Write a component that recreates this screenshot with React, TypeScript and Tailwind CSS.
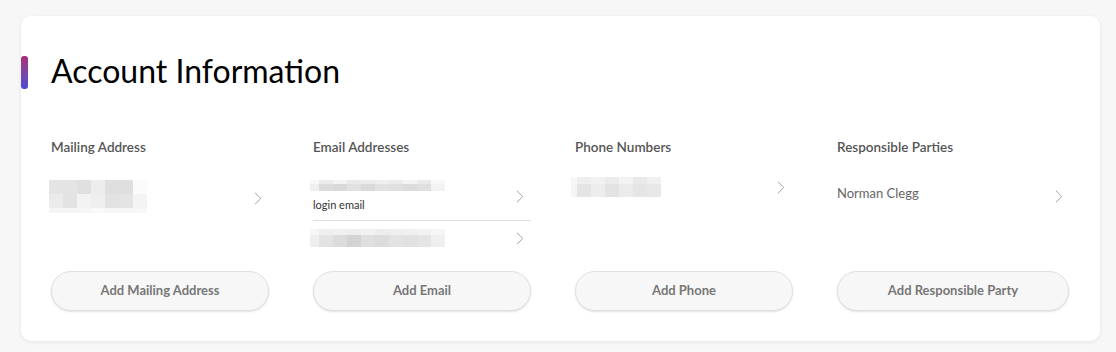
type Cell = [number, string];
type Band = { h: number; cells: Cell[] };

function Pixelated({ bands }: { bands: Band[] }) {
  const width = Math.max(...bands.map((b) => b.cells.reduce((s, c) => s + c[0], 0)));
  const height = bands.reduce((s, b) => s + b.h, 0);
  let y = 0;
  return (
    <svg width={width} height={height} className="block">
      {bands.map((b, i) => {
        let x = 0;
        const top = y;
        y += b.h;
        return b.cells.map(([w, c], j) => {
          const r = <rect key={`${i}-${j}`} x={x} y={top} width={w} height={b.h} fill={c} />;
          x += w;
          return r;
        });
      })}
    </svg>
  );
}

const mailingBlur: Band[] = [
  { h: 14, cells: [[14, '#e4e4e4'], [14, '#e4e4e4'], [14, '#e0e0e0'], [14, '#ededed'], [14, '#dfdfdf'], [14, '#dfdfdf'], [14, '#fbfbfb']] },
  { h: 14, cells: [[14, '#ebebeb'], [14, '#e3e3e3'], [14, '#f3f3f3'], [14, '#efefef'], [14, '#e2e2e2'], [14, '#e4e4e4'], [14, '#f4f4f4']] },
  { h: 5, cells: [[14, '#f5f5f5'], [14, '#f5f5f5'], [14, '#f6f6f6'], [14, '#f9f9f9'], [14, '#f6f6f6'], [14, '#f6f6f6'], [14, '#f7f7f7']] },
];

const emailBlur1: Band[] = [
  { h: 4, cells: [[9, '#f8f8f8'], [14, '#ececec'], [14, '#f3f3f3'], [14, '#e9e9e9'], [14, '#ebebeb'], [14, '#efefef'], [14, '#ececec'], [14, '#f4f4f4'], [14, '#eaeaea'], [14, '#f8f8f8']] },
  { h: 7, cells: [[9, '#efefef'], [14, '#dcdcdc'], [14, '#d9d9d9'], [14, '#e1e1e1'], [14, '#dadada'], [14, '#e2e2e2'], [14, '#e0e0e0'], [14, '#dcdcdc'], [14, '#dfdfdf'], [14, '#f3f3f3']] },
];

const emailBlur2: Band[] = [
  { h: 6, cells: [[9, '#f6f6f6'], [14, '#efefef'], [14, '#f0f0f0'], [14, '#eeeeee'], [14, '#f1f1f1'], [14, '#ededed'], [14, '#efefef'], [14, '#f0f0f0'], [14, '#f2f2f2'], [14, '#f6f6f6']] },
  { h: 12, cells: [[9, '#efefef'], [14, '#e3e3e3'], [14, '#dcdcdc'], [14, '#d3d3d3'], [14, '#dfdfdf'], [14, '#dcdcdc'], [14, '#e3e3e3'], [14, '#e1e1e1'], [14, '#e4e4e4'], [14, '#efefef']] },
];

const phoneBlur: Band[] = [
  { h: 7, cells: [[6, '#f7f7f7'], [14, '#eeeeee'], [14, '#f1f1f1'], [14, '#ebebeb'], [14, '#f3f3f3'], [14, '#e9e9e9'], [14, '#f0f0f0']] },
  { h: 13, cells: [[6, '#f5f5f5'], [14, '#e4e4e4'], [14, '#ededed'], [14, '#e3e3e3'], [14, '#ebebeb'], [14, '#e5e5e5'], [14, '#e8e8e8']] },
];

function Chevron() {
  return (
    <svg width="8" height="13" viewBox="0 0 8 13" className="shrink-0">
      <polyline points="1,0.8 6.8,6.5 1,12.2" fill="none" stroke="#a3a3a3" strokeWidth="1" />
    </svg>
  );
}

function Column({ title, children, button }: { title: string; children: React.ReactNode; button: string }) {
  return (
    <div className="flex flex-col">
      <h3 className="mt-[123px] h-4 text-[13.5px] font-semibold leading-4 text-[#555]">{title}</h3>
      <div className="h-[116px]">{children}</div>
      <button className="h-10 w-full rounded-full border border-[#e1e1e1] bg-[#f7f7f7] text-[13px] font-bold text-[#777] shadow-[0_1px_2px_rgba(0,0,0,0.12)]">
        {button}
      </button>
    </div>
  );
}

export default function App() {
  return (
    <div className="min-h-screen bg-[#f7f7f7] px-[21px] pt-4 pb-[11px]" style={{ fontFamily: 'Lato, "Open Sans", sans-serif' }}>
      <div className="relative h-[325px] w-[1079px] rounded-[10px] bg-white shadow-[0_1px_4px_rgba(0,0,0,0.08)]">
        <div className="absolute left-0 top-10 h-[33px] w-[7px] rounded-[3px] bg-gradient-to-b from-[#a62a78] to-[#4b4ad2]" />
        <h1 className="absolute left-[30px] top-[35px] text-[32px] leading-10 text-black">Account Information</h1>
        <div className="grid grid-cols-[218px_218px_218px_232px] gap-x-11 px-[30px]">
          <Column title="Mailing Address" button="Add Mailing Address">
            <div className="-ml-0.5 mt-[25px] flex items-center justify-between pr-[7px]">
              <Pixelated bands={mailingBlur} />
              <div className="mt-1">
                <Chevron />
              </div>
            </div>
          </Column>
          <Column title="Email Addresses" button="Add Email">
            <div className="mt-[25px] flex items-center justify-between border-b border-[#dedede] pb-2 pr-[7px]">
              <div className="-ml-[3px]">
                <Pixelated bands={emailBlur1} />
                <div className="ml-[3px] mt-[7px] text-[11px] leading-[14px] text-[#333]">login email</div>
              </div>
              <Chevron />
            </div>
            <div className="flex items-center justify-between pt-2 pr-[7px]">
              <div className="-ml-[3px]">
                <Pixelated bands={emailBlur2} />
              </div>
              <Chevron />
            </div>
          </Column>
          <Column title="Phone Numbers" button="Add Phone">
            <div className="-ml-[4px] mt-[22px] flex items-center justify-between pr-[8px]">
              <Pixelated bands={phoneBlur} />
              <Chevron />
            </div>
          </Column>
          <Column title="Responsible Parties" button="Add Responsible Party">
            <div className="mt-[29px] flex items-start justify-between pr-[6px]">
              <span className="text-[13px] leading-[18px] text-[#666]">Norman Clegg</span>
              <div className="mt-[6px]">
                <Chevron />
              </div>
            </div>
          </Column>
        </div>
      </div>
    </div>
  );
}
